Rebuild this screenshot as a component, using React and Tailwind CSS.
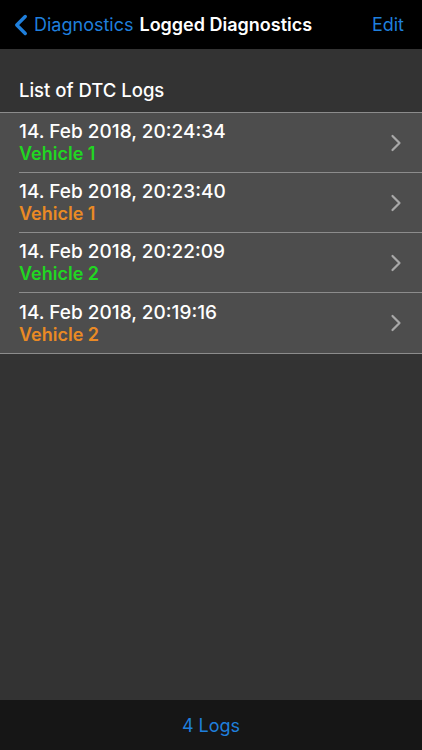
import { ChevronLeft, ChevronRight } from 'lucide-react'

const logs = [
  { date: '14. Feb 2018, 20:24:34', vehicle: 'Vehicle 1', color: 'text-[#22d622]' },
  { date: '14. Feb 2018, 20:23:40', vehicle: 'Vehicle 1', color: 'text-[#ea8a24]' },
  { date: '14. Feb 2018, 20:22:09', vehicle: 'Vehicle 2', color: 'text-[#22d622]' },
  { date: '14. Feb 2018, 20:19:16', vehicle: 'Vehicle 2', color: 'text-[#ea8a24]' }
]

const LogRow = ({ log, last }) => (
  <div className="flex items-center bg-[#4d4d4d] pl-[19px]">
    <div className={`flex flex-1 items-center pr-[12px] h-[60px] ${last ? '' : 'border-b border-[#8c8c8c]'}`}>
      <div className="flex-1 flex flex-col leading-[22px] pt-[1px]">
        <span className="text-[19px] text-white font-medium">{log.date}</span>
        <span className={`text-[18px] font-semibold ${log.color}`}>{log.vehicle}</span>
      </div>
      <ChevronRight size={28} strokeWidth={1.9} className="text-[#a8a8a8]" />
    </div>
  </div>
)

export default function App() {
  return (
    <div className="w-[422px] h-[750px] flex flex-col bg-[#333333] font-['Inter',_'Liberation_Sans',_sans-serif]">
      {/* Nav bar */}
      <div className="h-[49px] bg-black flex items-center pl-[4px] pr-[18px]">
        <div className="flex items-center text-[#1f7fdc]">
          <ChevronLeft size={34} strokeWidth={2.4} className="-mr-[4px]" />
          <span className="text-[18px]">Diagnostics</span>
        </div>
        <span className="ml-[6px] text-[18px] font-semibold text-white">Logged Diagnostics</span>
        <span className="ml-auto text-[18px] text-[#1f7fdc]">Edit</span>
      </div>

      {/* Content */}
      <div className="flex-1 flex flex-col">
        <div className="h-[63px] flex items-end pl-[19px] pb-[7px]">
          <span className="text-[18.5px] font-medium text-white">List of DTC Logs</span>
        </div>
        <div className="border-t border-[#8c8c8c] border-b">
          {logs.map((log, i) => (
            <LogRow key={i} log={log} last={i === logs.length - 1} />
          ))}
        </div>
      </div>

      {/* Toolbar */}
      <div className="h-[50px] bg-[#161616] flex items-center justify-center">
        <span className="text-[18px] text-[#1f7fdc]">4 Logs</span>
      </div>
    </div>
  )
}
